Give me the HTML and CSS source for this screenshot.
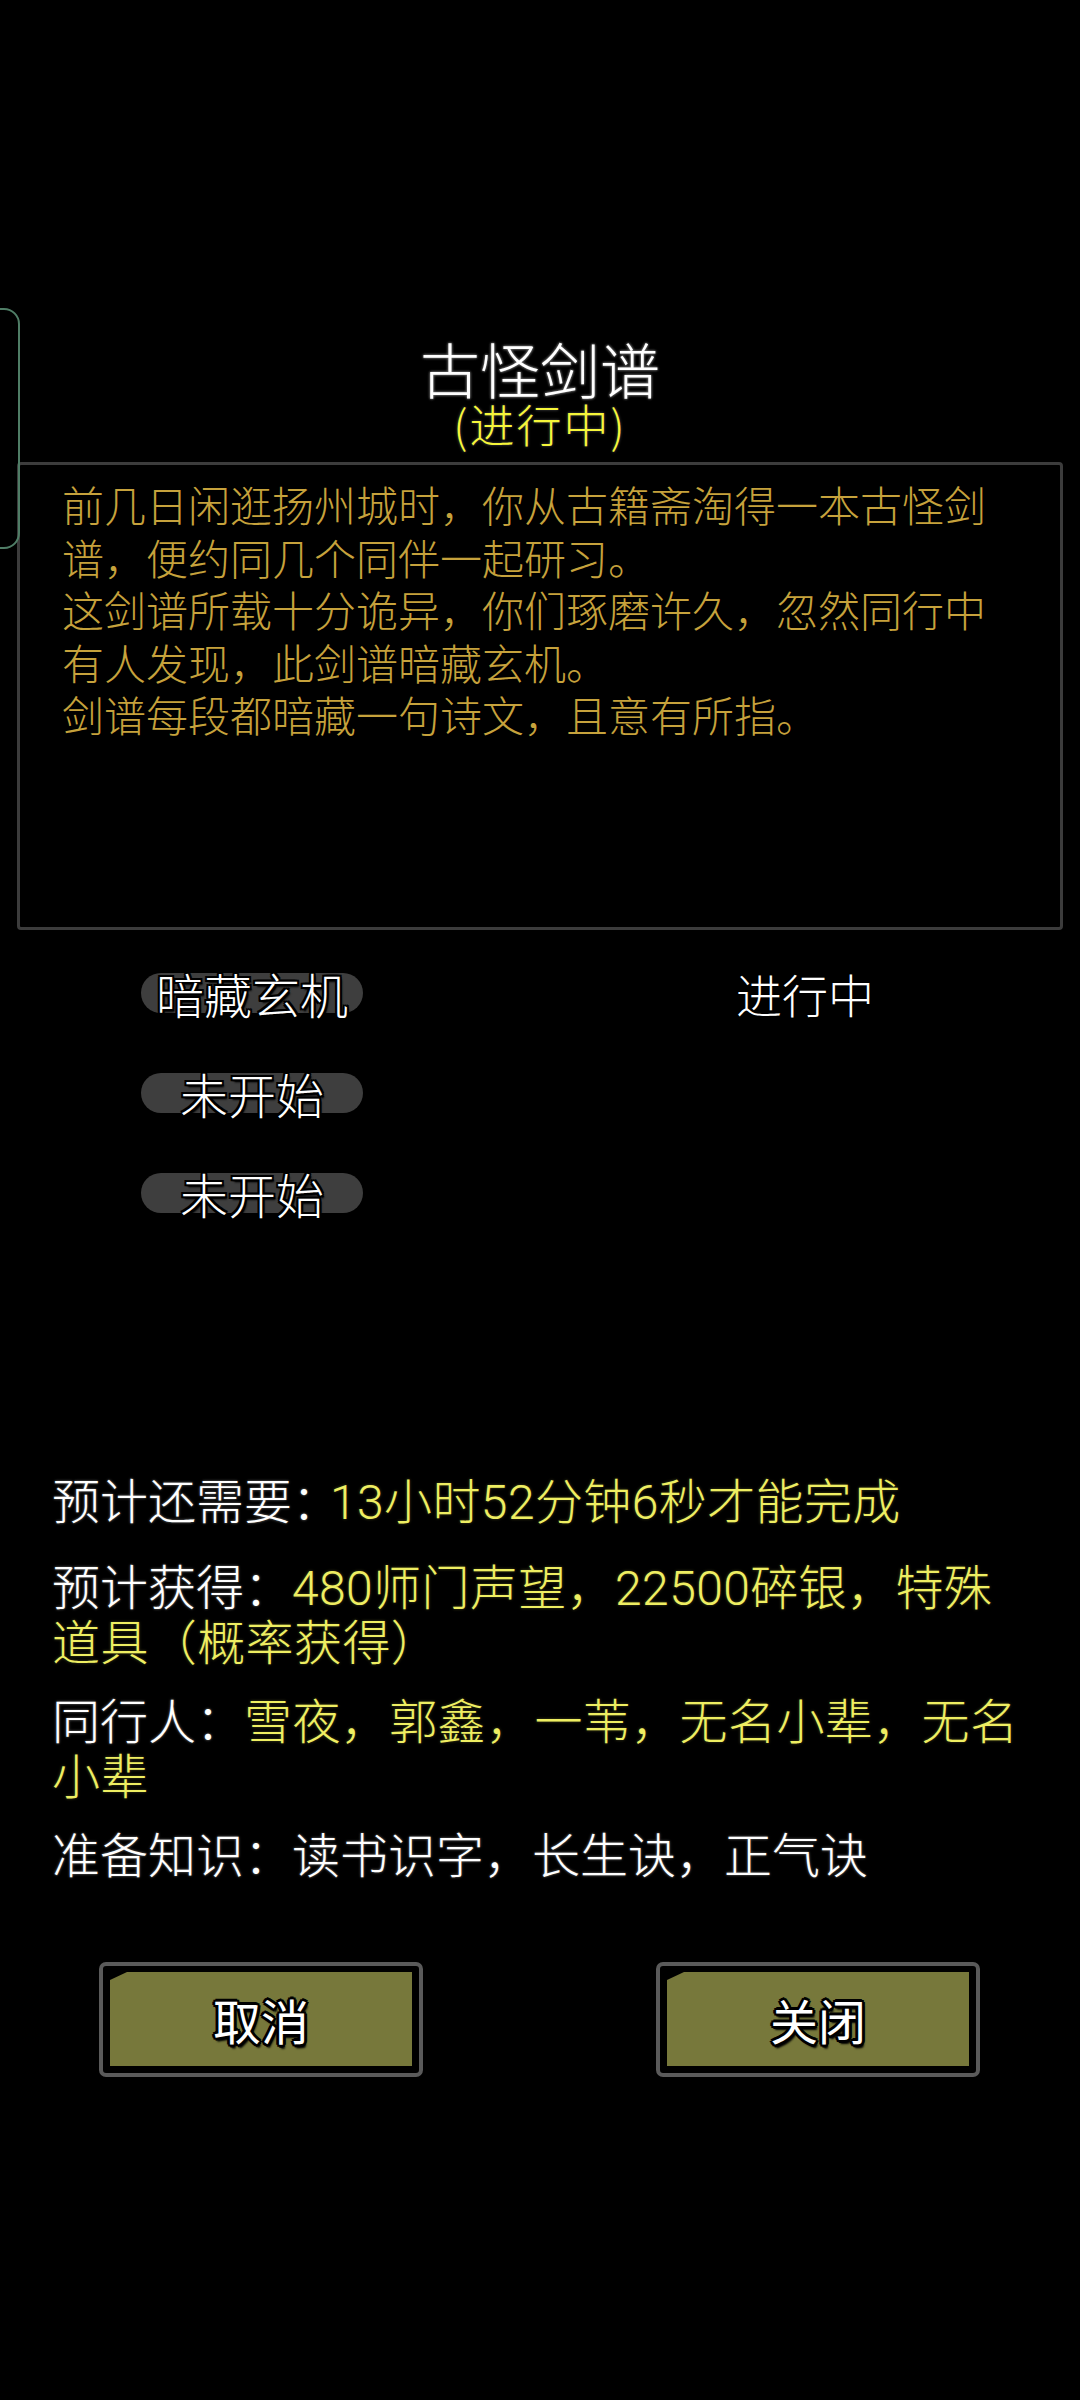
FILE: index.html
```html
<!DOCTYPE html>
<html lang="zh-CN">
<head>
<meta charset="utf-8">
<title>古怪剑谱</title>
<link rel="stylesheet" href="styles.css">
</head>
<body>
<div class="screen">
  <div class="edge-tab"></div>

  <header class="head">
    <h1 class="title">古怪剑谱</h1>
    <div class="subtitle">(进行中)</div>
  </header>

  <section class="story">
    <p>前几日闲逛扬州城时，你从古籍斋淘得一本古怪剑谱，便约同几个同伴一起研习。</p>
    <p>这剑谱所载十分诡异，你们琢磨许久，忽然同行中有人发现，此剑谱暗藏玄机。</p>
    <p>剑谱每段都暗藏一句诗文，且意有所指。</p>
  </section>

  <section class="steps">
    <div class="step">
      <span class="pill">暗藏玄机</span>
      <span class="status">进行中</span>
    </div>
    <div class="step">
      <span class="pill">未开始</span>
    </div>
    <div class="step">
      <span class="pill">未开始</span>
    </div>
  </section>

  <section class="info">
    <p class="info-line first"><span class="label">预计还需要：</span><span class="value">13小时52分钟6秒才能完成</span></p>
    <p class="info-line"><span class="label">预计获得：</span><span class="value">480师门声望，22500碎银，特殊道具（概率获得）</span></p>
    <p class="info-line"><span class="label">同行人：</span><span class="value">雪夜，郭鑫，一苇，无名小辈，无名小辈</span></p>
    <p class="info-line"><span class="label">准备知识：</span><span class="label">读书识字，长生诀，正气诀</span></p>
  </section>

  <footer class="actions">
    <button class="btn"><span class="btn-face">取消</span></button>
    <button class="btn"><span class="btn-face">关闭</span></button>
  </footer>
</div>
</body>
</html>
```

FILE: styles.css
```css
* {
  box-sizing: border-box;
}

html, body {
  margin: 0;
  padding: 0;
  background: #000;
}

body {
  font-family: "Noto Sans CJK SC", "Noto Sans", sans-serif;
  font-weight: 300;
  color: #fff;
}

.screen {
  position: relative;
  width: 1080px;
  height: 2400px;
  overflow: hidden;
  background: #000;
}

.edge-tab {
  position: absolute;
  left: -40px;
  top: 308px;
  width: 60px;
  height: 241px;
  border: 2px solid #4f7d66;
  border-radius: 16px;
}

.head {
  padding-top: 336px;
  text-align: center;
}

.title {
  margin: 0;
  font-size: 60px;
  line-height: 64px;
  font-weight: 300;
  color: #fff;
  text-shadow: 0 0 3px #666, 0 0 3px #666, 0 0 2px #444;
}

.subtitle {
  font-size: 45px;
  line-height: 48px;
  letter-spacing: 2px;
  color: #f6f63a;
  text-shadow: 0 0 3px #555;
}

.story {
  margin: 14px 0 0 17px;
  width: 1046px;
  height: 468px;
  border: 3px solid #3c3c3c;
  border-radius: 4px;
  padding: 13px 42px;
}

.story p {
  margin: 0;
  font-size: 42px;
  line-height: 52.5px;
  color: #c6a23c;
}

.steps {
  margin-top: 13px;
  padding-left: 141px;
}

.step {
  height: 100px;
  display: flex;
  align-items: center;
}

.pill {
  width: 222px;
  height: 40px;
  border-radius: 20px;
  background: #3e3e3e;
  display: flex;
  align-items: center;
  justify-content: center;
  font-size: 48px;
  line-height: 40px;
  color: #fff;
  white-space: nowrap;
  text-shadow:
    -2px -2px 0 #000, 2px -2px 0 #000, -2px 2px 0 #000, 2px 2px 0 #000,
    0 -2px 0 #000, 0 2px 0 #000, -2px 0 0 #000, 2px 0 0 #000,
    2px 3px 2px #000;
}

.status {
  margin-left: 373px;
  font-size: 46px;
  line-height: 40px;
  color: #fff;
}

.info {
  margin-top: 228px;
  padding-left: 52px;
  width: 1022px;
  display: flex;
  flex-direction: column;
  gap: 24px;
}

.info-line {
  margin: 0;
  font-size: 48px;
  line-height: 55px;
}

.info-line.first {
  margin-bottom: 7px;
}

.info-line.first .value {
  margin-left: -10px;
}

.label {
  color: #fff;
  text-shadow: 0 0 3px #555, 0 0 2px #444;
}

.value {
  font-family: Roboto, "Noto Sans CJK SC", sans-serif;
  line-height: 0.8;
  letter-spacing: 0.4px;
  color: #eeee62;
  text-shadow: 0 0 3px #4a4a20;
}

.actions {
  margin-top: 82px;
  padding: 0 100px 0 99px;
  display: flex;
  justify-content: space-between;
}

.btn {
  width: 324px;
  height: 115px;
  margin: 0;
  padding: 6px 7px 7px 7px;
  border: 4px solid #5a5a5a;
  border-radius: 7px;
  background: #000;
  font: inherit;
  cursor: pointer;
}

.btn-face {
  display: flex;
  align-items: center;
  justify-content: center;
  width: 100%;
  height: 100%;
  background: #77783b;
  clip-path: polygon(17px 0, 100% 0, 100% 100%, 0 100%, 0 8px);
  font-size: 48px;
  font-weight: 400;
  line-height: 1;
  color: #fff;
  text-shadow:
    -2px -2px 0 #000, 2px -2px 0 #000, -2px 2px 0 #000, 2px 2px 0 #000,
    0 -3px 0 #000, 0 3px 0 #000, -3px 0 0 #000, 3px 0 0 #000,
    2px 4px 2px #000;
}
```
